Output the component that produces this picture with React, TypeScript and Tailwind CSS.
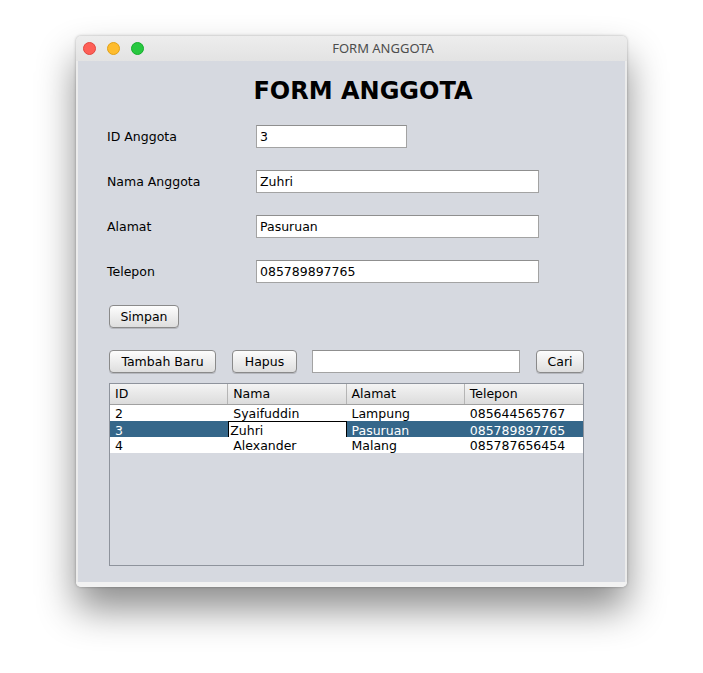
import React from 'react';

const rows = [
  { id: '2', nama: 'Syaifuddin', alamat: 'Lampung', telp: '085644565767' },
  { id: '3', nama: 'Zuhri', alamat: 'Pasuruan', telp: '085789897765' },
  { id: '4', nama: 'Alexander', alamat: 'Malang', telp: '085787656454' },
];

const fields = [
  { label: 'ID Anggota', value: '3', w: 'w-[151px]' },
  { label: 'Nama Anggota', value: 'Zuhri', w: 'w-[283px]' },
  { label: 'Alamat', value: 'Pasuruan', w: 'w-[283px]' },
  { label: 'Telepon', value: '085789897765', w: 'w-[283px]' },
];

function Btn({ children, w }: { children: React.ReactNode; w: string }) {
  return (
    <button className={`${w} h-[23px] pt-[2px] rounded-[4px] border border-[#8a8a8a] bg-gradient-to-b from-[#fdfdfd] to-[#dedede] text-[12.5px] text-black shadow-[0_1px_0_rgba(0,0,0,0.15)] flex items-center justify-center`}>
      {children}
    </button>
  );
}

function Field({ w, value }: { w: string; value: string }) {
  return (
    <div className={`${w} h-[23px] pt-[2px] bg-white border border-[#a3a3a3] border-t-[#8f8f8f] flex items-center pl-[3px] text-[12.5px] text-black`}>
      {value}
    </div>
  );
}

export default function App() {
  return (
    <div className="min-h-screen bg-white pl-[76px] pt-[36px] font-['DejaVu_Sans',sans-serif]">
      <div className="w-[551px] h-[551px] rounded-[5px] bg-[#ebebeb] flex flex-col shadow-[0_22px_38px_rgba(0,0,0,0.45),0_0_3px_rgba(0,0,0,0.3)]">
        {/* Title bar */}
        <div className="h-[25px] rounded-t-[5px] bg-gradient-to-b from-[#ededed] to-[#e3e3e3] flex items-center relative">
          <div className="flex gap-[11px] pl-[7px]">
            <span className="w-[13px] h-[13px] rounded-full bg-[#fe5f57] border border-[#e2463f]" />
            <span className="w-[13px] h-[13px] rounded-full bg-[#febc2e] border border-[#e1a116]" />
            <span className="w-[13px] h-[13px] rounded-full bg-[#28c840] border border-[#14ae2b]" />
          </div>
          <div className="absolute inset-0 flex items-center justify-center pl-[63px] text-[13px] text-[#4d4d4d] font-['Noto_Sans',sans-serif]">
            FORM ANGGOTA
          </div>
        </div>

        {/* Body */}
        <div className="flex-1 mx-[2px] bg-[#d6d9e0] flex flex-col pl-[29px] pt-[16px]">
          <div className="h-[26px] pt-[2px] flex items-center justify-center pr-[6px] text-[24px] font-bold text-black">
            FORM ANGGOTA
          </div>

          <div className="mt-[22px] flex flex-col gap-[22px]">
            {fields.map(f => (
              <div key={f.label} className="flex items-center h-[23px]">
                <div className="w-[149px] pt-[2px] text-[12.5px] text-black">{f.label}</div>
                <Field w={f.w} value={f.value} />
              </div>
            ))}
          </div>

          <div className="mt-[22px] pl-[2px]">
            <Btn w="w-[70px]">Simpan</Btn>
          </div>

          <div className="mt-[22px] pl-[2px] flex items-center">
            <Btn w="w-[107px]">Tambah Baru</Btn>
            <div className="ml-[16px]"><Btn w="w-[65px]">Hapus</Btn></div>
            <div className="ml-[15px]"><Field w="w-[208px]" value="" /></div>
            <div className="ml-[16px]"><Btn w="w-[48px]">Cari</Btn></div>
          </div>

          <div className="mt-[10px] ml-[2px] w-[475px] h-[183px] border border-[#8e939c] flex flex-col text-[12.5px]">
            <div className="grid grid-cols-4 h-[21px] bg-gradient-to-b from-[#f4f4f4] to-[#dcdcdc] border-b border-[#a0a0a0]">
              {['ID', 'Nama', 'Alamat', 'Telepon'].map((h, i) => (
                <div key={h} className={`flex items-center pl-[5px] text-black ${i < 3 ? 'border-r border-[#b5b5b5]' : ''}`}>{h}</div>
              ))}
            </div>
            {rows.map(r => {
              const sel = r.id === '3';
              return (
                <div key={r.id} className={`grid grid-cols-4 h-[16px] ${sel ? 'bg-[#35678a] text-white' : 'bg-white text-black'}`}>
                  <div className="flex items-center pl-[5px]">{r.id}</div>
                  {sel ? (
                    <div className="flex items-center pl-[1px] bg-white text-black border border-black">{r.nama}</div>
                  ) : (
                    <div className="flex items-center pl-[5px]">{r.nama}</div>
                  )}
                  <div className="flex items-center pl-[5px]">{r.alamat}</div>
                  <div className="flex items-center pl-[5px]">{r.telp}</div>
                </div>
              );
            })}
          </div>
        </div>

        <div className="h-[5px] rounded-b-[5px] bg-[#f2f2f2]" />
      </div>
    </div>
  );
}
